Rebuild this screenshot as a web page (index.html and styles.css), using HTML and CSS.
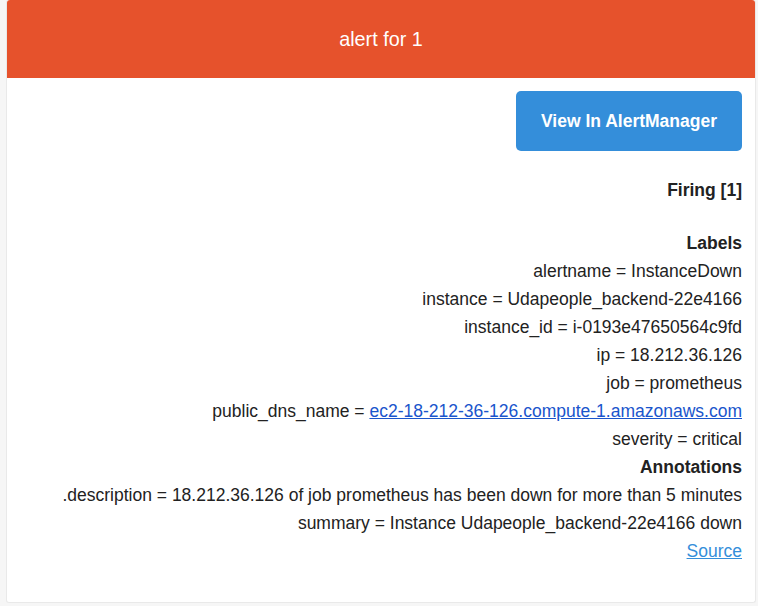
FILE: index.html
```html
<!DOCTYPE html>
<html>
<head>
<meta charset="utf-8">
<link rel="stylesheet" href="styles.css">
</head>
<body>
<div class="card">
  <div class="header">alert for 1</div>
  <div class="content">
    <div class="btn-row"><a class="btn" href="#">View In AlertManager</a></div>
    <p class="line firing"><strong>Firing [1]</strong></p>
    <div class="group">
      <p class="line"><strong>Labels</strong></p>
      <p class="line">alertname = InstanceDown</p>
      <p class="line">instance = Udapeople_backend-22e4166</p>
      <p class="line">instance_id = i-0193e47650564c9fd</p>
      <p class="line">ip = 18.212.36.126</p>
      <p class="line">job = prometheus</p>
      <p class="line">public_dns_name = <a class="dns" href="#">ec2-18-212-36-126.compute-1.amazonaws.com</a></p>
      <p class="line">severity = critical</p>
      <p class="line"><strong>Annotations</strong></p>
      <p class="line">.description = 18.212.36.126 of job prometheus has been down for more than 5 minutes</p>
      <p class="line">summary = Instance Udapeople_backend-22e4166 down</p>
      <p class="line"><a class="source" href="#">Source</a></p>
    </div>
  </div>
</div>
</body>
</html>
```
FILE: styles.css
```css
html, body {
  margin: 0;
  padding: 0;
  background: #f6f6f6;
}
body {
  font-family: "Liberation Sans", Arial, sans-serif;
  color: #222;
}
.card {
  margin: 0 2px 0 6px;
  background: #fff;
  border: 1px solid #e9e9e9;
  border-top: none;
  border-radius: 3px;
  height: 603px;
  box-sizing: border-box;
}
.header {
  background: #e6522c;
  color: #fff;
  height: 78px;
  display: flex;
  align-items: center;
  justify-content: center;
  font-size: 19.8px;
  border-radius: 3px 3px 0 0;
  padding-top: 1px;
  box-sizing: border-box;
}
.content {
  padding: 13px 13px 38px;
  text-align: right;
  font-size: 17.5px;
}
.btn-row {
  display: flex;
  justify-content: flex-end;
  margin-bottom: 25px;
}
.btn {
  display: flex;
  align-items: center;
  justify-content: center;
  width: 226px;
  height: 60px;
  background: #348eda;
  color: #fff;
  font-weight: bold;
  font-size: 17.5px;
  text-decoration: none;
  border-radius: 5px;
}
.line {
  margin: 0;
  line-height: 28px;
  white-space: nowrap;
}
.firing {
  margin-bottom: 25px;
}
.dns {
  color: #1a55cc;
}
.source {
  color: #348eda;
}
```
